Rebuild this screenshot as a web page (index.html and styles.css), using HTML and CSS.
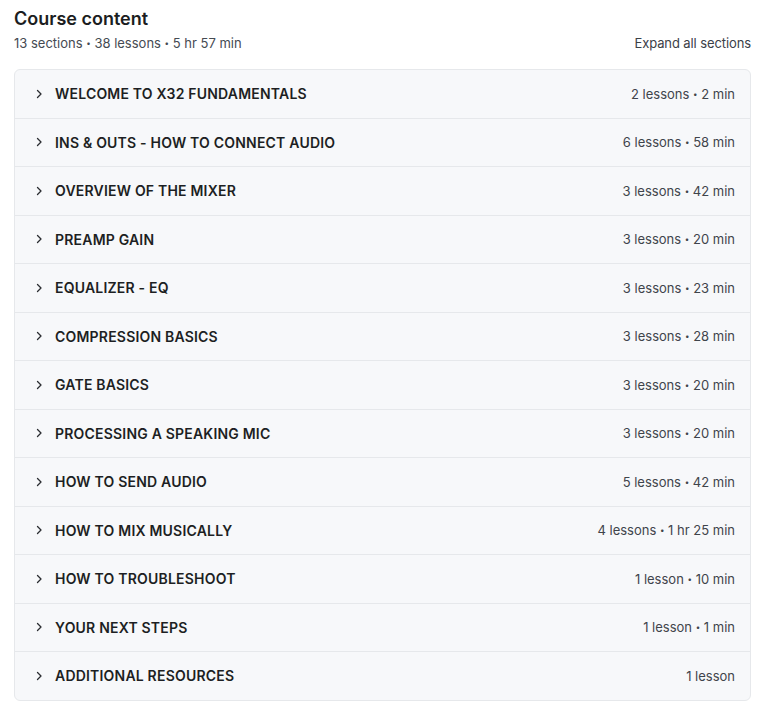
FILE: index.html
```html
<!DOCTYPE html>
<html>
<head>
<meta charset="utf-8">
<link rel="stylesheet" href="styles.css">
</head>
<body>
<div class="page">
  <h2 class="title">Course content</h2>
  <div class="meta-row">
    <span class="meta">13 sections <span class="dot">•</span> 38 lessons <span class="dot">•</span> 5 hr 57 min</span>
    <span class="expand">Expand all sections</span>
  </div>
  <div class="sections">
    <div class="row"><span class="chev"><svg viewBox="0 0 10 10" width="10" height="10"><path d="M3.5 1.5 L7 5 L3.5 8.5" /></svg></span><span class="name">WELCOME TO X32 FUNDAMENTALS</span><span class="info">2 lessons <span class="dot">•</span> 2 min</span></div>
    <div class="row"><span class="chev"><svg viewBox="0 0 10 10" width="10" height="10"><path d="M3.5 1.5 L7 5 L3.5 8.5" /></svg></span><span class="name">INS &amp; OUTS - HOW TO CONNECT AUDIO</span><span class="info">6 lessons <span class="dot">•</span> 58 min</span></div>
    <div class="row"><span class="chev"><svg viewBox="0 0 10 10" width="10" height="10"><path d="M3.5 1.5 L7 5 L3.5 8.5" /></svg></span><span class="name">OVERVIEW OF THE MIXER</span><span class="info">3 lessons <span class="dot">•</span> 42 min</span></div>
    <div class="row"><span class="chev"><svg viewBox="0 0 10 10" width="10" height="10"><path d="M3.5 1.5 L7 5 L3.5 8.5" /></svg></span><span class="name">PREAMP GAIN</span><span class="info">3 lessons <span class="dot">•</span> 20 min</span></div>
    <div class="row"><span class="chev"><svg viewBox="0 0 10 10" width="10" height="10"><path d="M3.5 1.5 L7 5 L3.5 8.5" /></svg></span><span class="name">EQUALIZER - EQ</span><span class="info">3 lessons <span class="dot">•</span> 23 min</span></div>
    <div class="row"><span class="chev"><svg viewBox="0 0 10 10" width="10" height="10"><path d="M3.5 1.5 L7 5 L3.5 8.5" /></svg></span><span class="name">COMPRESSION BASICS</span><span class="info">3 lessons <span class="dot">•</span> 28 min</span></div>
    <div class="row"><span class="chev"><svg viewBox="0 0 10 10" width="10" height="10"><path d="M3.5 1.5 L7 5 L3.5 8.5" /></svg></span><span class="name">GATE BASICS</span><span class="info">3 lessons <span class="dot">•</span> 20 min</span></div>
    <div class="row"><span class="chev"><svg viewBox="0 0 10 10" width="10" height="10"><path d="M3.5 1.5 L7 5 L3.5 8.5" /></svg></span><span class="name">PROCESSING A SPEAKING MIC</span><span class="info">3 lessons <span class="dot">•</span> 20 min</span></div>
    <div class="row"><span class="chev"><svg viewBox="0 0 10 10" width="10" height="10"><path d="M3.5 1.5 L7 5 L3.5 8.5" /></svg></span><span class="name">HOW TO SEND AUDIO</span><span class="info">5 lessons <span class="dot">•</span> 42 min</span></div>
    <div class="row"><span class="chev"><svg viewBox="0 0 10 10" width="10" height="10"><path d="M3.5 1.5 L7 5 L3.5 8.5" /></svg></span><span class="name">HOW TO MIX MUSICALLY</span><span class="info">4 lessons <span class="dot">•</span> 1 hr 25 min</span></div>
    <div class="row"><span class="chev"><svg viewBox="0 0 10 10" width="10" height="10"><path d="M3.5 1.5 L7 5 L3.5 8.5" /></svg></span><span class="name">HOW TO TROUBLESHOOT</span><span class="info">1 lesson <span class="dot">•</span> 10 min</span></div>
    <div class="row"><span class="chev"><svg viewBox="0 0 10 10" width="10" height="10"><path d="M3.5 1.5 L7 5 L3.5 8.5" /></svg></span><span class="name">YOUR NEXT STEPS</span><span class="info">1 lesson <span class="dot">•</span> 1 min</span></div>
    <div class="row"><span class="chev"><svg viewBox="0 0 10 10" width="10" height="10"><path d="M3.5 1.5 L7 5 L3.5 8.5" /></svg></span><span class="name">ADDITIONAL RESOURCES</span><span class="info">1 lesson</span></div>
  </div>
</div>
</body>
</html>
```

FILE: styles.css
```css
html, body {
  margin: 0;
  padding: 0;
  background: #ffffff;
}
body {
  font-family: Inter, "Noto Sans", "Liberation Sans", sans-serif;
  color: #1d1f23;
}
.page {
  padding: 8px 17px 0 14px;
}
.title {
  margin: 0;
  font-size: 18px;
  font-weight: 600;
  line-height: 22px;
  color: #1b1d21;
}
.meta-row {
  display: flex;
  justify-content: space-between;
  align-items: center;
  margin-top: 4px;
  height: 18px;
  font-size: 13px;
  color: #454a52;
}
.expand {
  letter-spacing: -0.1px;
  color: #3b4047;
}
.dot {
  font-size: 8px;
  vertical-align: 2px;
}
.sections {
  margin-top: 17px;
  background: #f7f8fa;
  border: 1px solid #e6e8eb;
  border-radius: 6px;
}
.row {
  display: flex;
  align-items: center;
  height: 47.5px;
  padding: 0 15px 0 19px;
  border-bottom: 1px solid #e6e8eb;
}
.row:last-child {
  border-bottom: none;
}
.chev {
  width: 10px;
  height: 10px;
  display: flex;
  margin-right: 11px;
}
.chev svg path {
  fill: none;
  stroke: #2a2c30;
  stroke-width: 1.3;
  stroke-linecap: round;
  stroke-linejoin: round;
}
.name {
  flex: 1;
  font-size: 14px;
  font-weight: 600;
  color: #1d1f23;
  letter-spacing: 0.2px;
}
.info {
  font-size: 13px;
  color: #3f444b;
}
```
